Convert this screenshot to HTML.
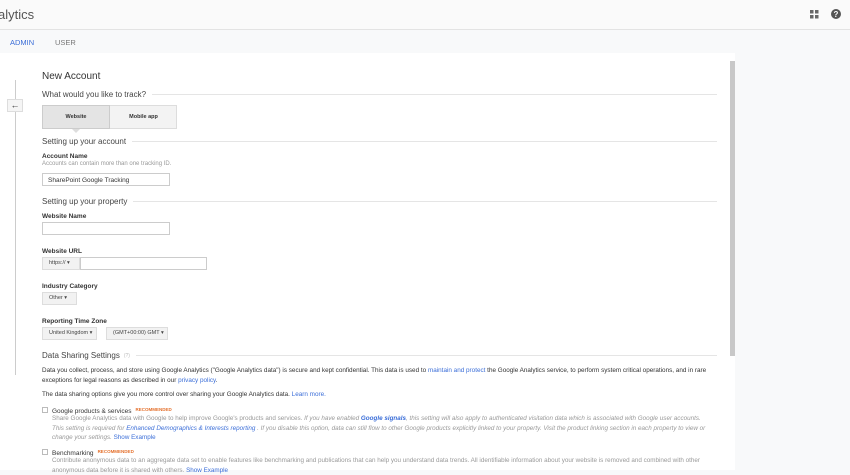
<!DOCTYPE html>
<html><head><meta charset="utf-8"><style>
*{margin:0;padding:0;box-sizing:border-box}
body{width:850px;height:470px;overflow:hidden;background:#f8f9fa;font-family:"Liberation Sans",Arial,sans-serif;color:#333;position:relative}
.hdr{position:absolute;left:0;top:0;width:850px;height:30px;background:#fafafa;border-bottom:1px solid #e3e3e3}
.hdr .t{position:absolute;left:-2px;top:7px;font-size:13px;color:#555}
.tabs{position:absolute;top:30px;left:0;width:850px;height:23px;background:#f8f9fa}
.tab{position:absolute;top:8px;font-size:7.5px}
.ul{position:absolute;left:0;top:51px;width:44px;height:2px;background:#f4a13a}
.main{position:absolute;left:0;top:53px;width:735px;height:417px;background:#fff}
.sb{position:absolute;left:730px;top:61px;width:5px;height:295px;background:#c8c8c8}
.vl{position:absolute;left:15px;top:80px;width:1px;height:295px;background:#ccc}
.back{position:absolute;left:7px;top:99px;width:16px;height:13px;border:1px solid #ddd;background:#f5f5f5;font-size:9px;text-align:center;line-height:10px;font-weight:bold}
.a{position:absolute;white-space:nowrap}
.sec{position:absolute;left:42px;font-size:8px;color:#444;display:flex;align-items:center;width:675px}
.sec:after{content:"";flex:1;height:1px;background:#e5e5e5;margin-left:6px}
.lb{font-size:6.5px;font-weight:bold;color:#333}
.in{position:absolute;border:1px solid #ccc;background:#fff;font-size:6.5px;padding:3px 5px;height:13px}
.dd{position:absolute;border:1px solid #ddd;background:#f2f2f2;font-size:5.5px;color:#444;height:13px;line-height:11px;padding-left:6px}
.p{font-size:6.35px;color:#333;line-height:9.5px}
.g{font-size:6.3px;color:#999;line-height:9.5px}
a{color:#3b6ed8;text-decoration:none}
.rec{color:#e4702c;font-size:4.5px;font-weight:bold;margin-left:4px;vertical-align:2px}
.cb{position:absolute;left:42px;width:6px;height:6px;border:1px solid #bbb}
.btn{position:absolute;top:105px;height:24px;font-size:5.5px;font-weight:bold;display:flex;align-items:center;justify-content:center}
</style></head><body>
<div class="hdr"><div class="t">alytics</div>
<svg style="position:absolute;left:810px;top:10px" width="9" height="9"><rect x="0" y="0" width="3.5" height="3.5" fill="#666"/><rect x="5" y="0" width="3.5" height="3.5" fill="#666"/><rect x="0" y="5" width="3.5" height="3.5" fill="#666"/><rect x="5" y="5" width="3.5" height="3.5" fill="#666"/></svg>
<svg style="position:absolute;left:831px;top:9px" width="10" height="10"><circle cx="5" cy="5" r="5" fill="#555"/><text x="5" y="8" font-size="8" font-weight="bold" fill="#fff" text-anchor="middle" font-family="Liberation Sans">?</text></svg>
</div>
<div class="tabs"><div class="tab" style="left:10px;color:#3b6ed8">ADMIN</div><div class="tab" style="left:55px;color:#777">USER</div><div class="ul"></div></div>
<div class="main"></div>
<div class="sb"></div>
<div class="vl"></div>
<div class="back">&#8592;</div>
<div class="a" style="left:42px;top:71px;font-size:10px;color:#333">New Account</div>
<div class="sec" style="top:90px">What would you like to track?</div>
<div class="a" style="left:42px;top:105px;width:135px;height:24px;border:1px solid #ddd;background:#f3f3f3"></div>
<div class="btn" style="left:42px;width:68px;border:1px solid #ccc;background:#e4e4e4">Website</div>
<div class="btn" style="left:110px;width:67px">Mobile app</div>
<div class="a" style="left:72px;top:129px;width:0;height:0;border-left:4px solid transparent;border-right:4px solid transparent;border-top:4px solid #ddd"></div>
<div class="sec" style="top:137px">Setting up your account</div>
<div class="a lb" style="left:42px;top:153px">Account Name</div>
<div class="a g" style="left:42px;top:160px;font-size:6px">Accounts can contain more than one tracking ID.</div>
<div class="in" style="left:42px;top:173px;width:128px">SharePoint Google Tracking</div>
<div class="sec" style="top:197px">Setting up your property</div>
<div class="a lb" style="left:42px;top:213px">Website Name</div>
<div class="in" style="left:42px;top:222px;width:128px"></div>
<div class="a lb" style="left:42px;top:248px">Website URL</div>
<div class="dd" style="left:42px;top:257px;width:38px">https:// ▾</div>
<div class="in" style="left:80px;top:257px;width:127px"></div>
<div class="a lb" style="left:42px;top:283px">Industry Category</div>
<div class="dd" style="left:42px;top:292px;width:35px">Other ▾</div>
<div class="a lb" style="left:42px;top:318px">Reporting Time Zone</div>
<div class="dd" style="left:42px;top:327px;width:55px">United Kingdom ▾</div>
<div class="dd" style="left:106px;top:327px;width:62px">(GMT+00:00) GMT ▾</div>
<div class="sec" style="top:351px">Data Sharing Settings <span style="color:#bbb;font-size:5px;margin-left:4px">(?)</span></div>
<div class="a p" style="left:42px;top:366px">Data you collect, process, and store using Google Analytics ("Google Analytics data") is secure and kept confidential. This data is used to <a>maintain and protect</a> the Google Analytics service, to perform system critical operations, and in rare<br>exceptions for legal reasons as described in our <a>privacy policy</a>.</div>
<div class="a p" style="left:42px;top:390px">The data sharing options give you more control over sharing your Google Analytics data. <a>Learn more.</a></div>
<div class="cb" style="top:407px"></div>
<div class="a p" style="left:52px;top:405px;color:#333;font-size:6.5px">Google products &amp; services<span class="rec">RECOMMENDED</span></div>
<div class="a g" style="left:52px;top:414px">Share Google Analytics data with Google to help improve Google's products and services. <i>If you have enabled <a><b>Google signals</b></a>, this setting will also apply to authenticated visitation data which is associated with Google user accounts.</i><br><i>This setting is required for <a>Enhanced Demographics &amp; Interests reporting</a> . If you disable this option, data can still flow to other Google products explicitly linked to your property. Visit the product linking section in each property to view or</i><br><i>change your settings.</i> <a>Show Example</a></div>
<div class="cb" style="top:449px"></div>
<div class="a p" style="left:52px;top:447px;font-size:6.5px">Benchmarking<span class="rec">RECOMMENDED</span></div>
<div class="a g" style="left:52px;top:456px">Contribute anonymous data to an aggregate data set to enable features like benchmarking and publications that can help you understand data trends. All identifiable information about your website is removed and combined with other<br>anonymous data before it is shared with others. <a>Show Example</a></div>
</body></html>
